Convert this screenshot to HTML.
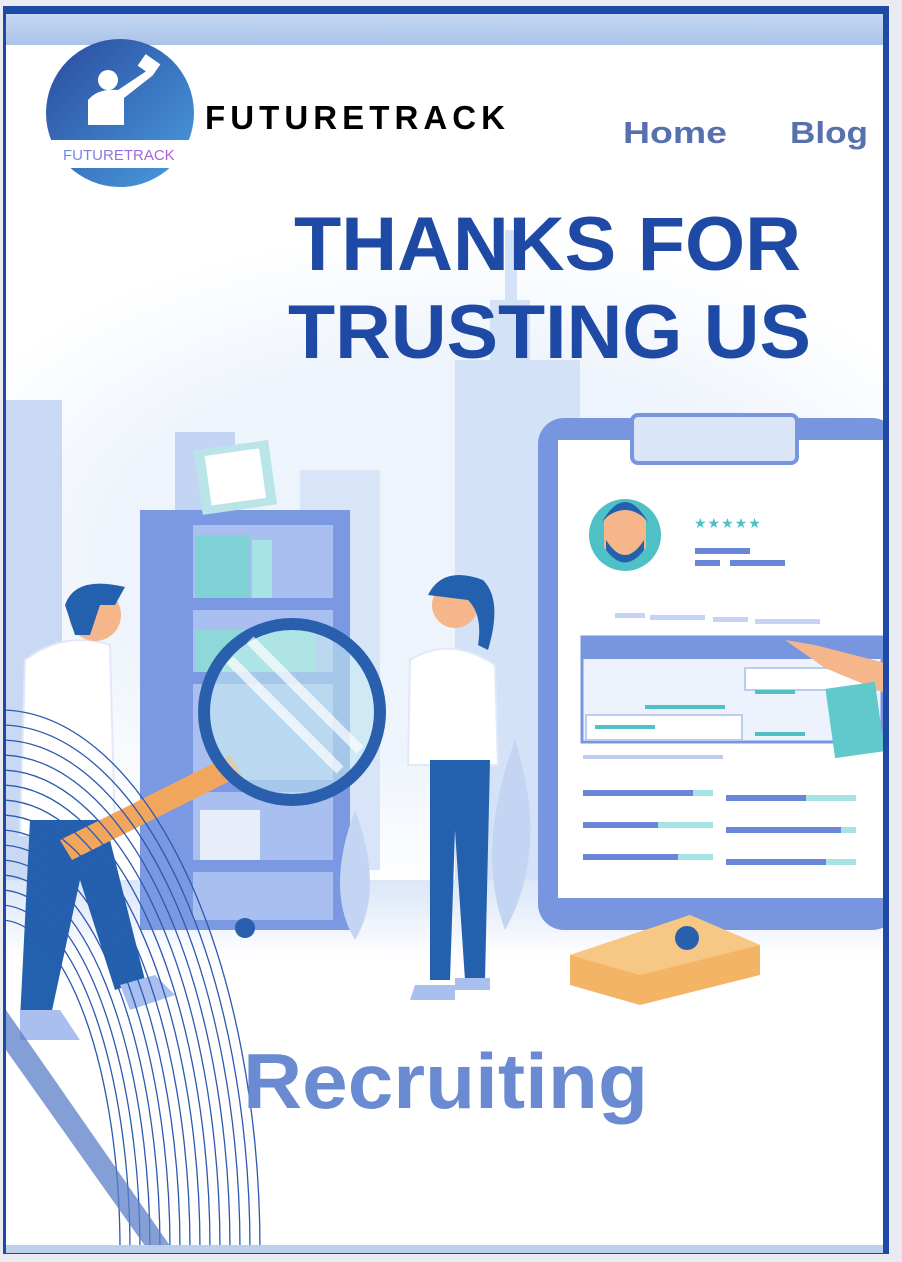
<!DOCTYPE html>
<html><head><meta charset="utf-8"><style>
html,body{margin:0;padding:0;width:902px;height:1262px;overflow:hidden;background:#e9ebf0;font-family:"Liberation Sans",sans-serif}
svg{position:absolute;left:0;top:0;display:block}
</style></head><body>
<svg width="902" height="1262" viewBox="0 0 902 1262" xmlns="http://www.w3.org/2000/svg">
<defs>
<linearGradient id="top" x1="0" y1="0" x2="0" y2="1"><stop offset="0" stop-color="#c6d8f2"/><stop offset="1" stop-color="#a9c3e8"/></linearGradient>
<linearGradient id="logo" x1="0" y1="0" x2="1" y2="1"><stop offset="0" stop-color="#2a4a9e"/><stop offset="1" stop-color="#4a9ee0"/></linearGradient>
<linearGradient id="floor" x1="0" y1="0" x2="0" y2="1"><stop offset="0" stop-color="#dbe6f8"/><stop offset="1" stop-color="#ffffff"/></linearGradient>
<linearGradient id="ft" x1="0" y1="0" x2="1" y2="0"><stop offset="0" stop-color="#6b8fe0"/><stop offset="1" stop-color="#b25ad6"/></linearGradient>
<radialGradient id="haze" cx="0.5" cy="0.5" r="0.5"><stop offset="0.6" stop-color="#eef4fc"/><stop offset="1" stop-color="#ffffff"/></radialGradient>
<clipPath id="content"><rect x="6" y="14" width="877" height="1239"/></clipPath>
</defs>
<rect x="3" y="6" width="886" height="1248" fill="#1e4aa6"/>
<g clip-path="url(#content)">
<rect x="0" y="0" width="902" height="1262" fill="#ffffff"/>
<rect x="0" y="14" width="902" height="31" fill="url(#top)"/>
<ellipse cx="450" cy="560" rx="560" ry="330" fill="url(#haze)"/>
<rect x="455" y="360" width="125" height="560" fill="#d3e2f7"/>
<rect x="490" y="300" width="40" height="70" fill="#d3e2f7"/>
<rect x="505" y="230" width="12" height="80" fill="#d3e2f7"/>
<rect x="6" y="400" width="56" height="540" fill="#c9d9f4"/>
<rect x="175" y="432" width="60" height="90" fill="#c3d5f3"/>
<rect x="300" y="470" width="80" height="400" fill="#d8e5f8"/>
<rect x="6" y="880" width="877" height="80" fill="url(#floor)"/>
<rect x="140" y="510" width="210" height="420" fill="#7b98e2"/>
<rect x="193" y="525" width="140" height="395" fill="#a9bff0"/>
<rect x="193" y="598" width="140" height="12" fill="#7b98e2"/>
<rect x="193" y="672" width="140" height="12" fill="#7b98e2"/>
<rect x="193" y="780" width="140" height="12" fill="#7b98e2"/>
<rect x="193" y="860" width="140" height="12" fill="#7b98e2"/>
<rect x="195" y="535" width="55" height="63" fill="#7fd3d6"/>
<rect x="252" y="540" width="20" height="58" fill="#a7e2e4"/>
<rect x="195" y="630" width="120" height="42" fill="#8fd8da"/>
<rect x="200" y="810" width="60" height="50" fill="#e8eef9"/>
<rect x="198" y="445" width="75" height="65" fill="#b9e5e8" transform="rotate(-8 235 478)"/>
<rect x="208" y="452" width="55" height="50" fill="#ffffff" transform="rotate(-8 235 478)"/>
<rect x="538" y="418" width="360" height="512" rx="26" fill="#7896df"/>
<rect x="558" y="440" width="330" height="458" fill="#ffffff"/>
<rect x="632" y="415" width="165" height="48" rx="6" fill="#dbe5f8" stroke="#7896df" stroke-width="4"/>
<circle cx="625" cy="535" r="36" fill="#4fc0c6"/>
<path d="M604 520 q21 -30 42 0 v28 q-21 25 -42 0z" fill="#f4b68a"/>
<path d="M602 522 q23 -40 46 0 l-6 -6 q-17 -12 -34 0z" fill="#2360ad"/>
<path d="M606 540 q19 30 38 0 v10 q-19 25 -38 0z" fill="#2360ad"/>
<text x="694" y="528" font-size="14" fill="#4fc0c6" letter-spacing="1">★★★★★</text>
<rect x="695" y="548" width="55" height="6" fill="#6a86d6"/>
<rect x="695" y="560" width="25" height="6" fill="#6a86d6"/>
<rect x="730" y="560" width="55" height="6" fill="#6a86d6"/>
<rect x="615" y="613" width="30" height="5" fill="#c4d3f3"/><rect x="650" y="615" width="55" height="5" fill="#c4d3f3"/><rect x="713" y="617" width="35" height="5" fill="#c4d3f3"/><rect x="755" y="619" width="65" height="5" fill="#c4d3f3"/>
<rect x="582" y="637" width="300" height="105" fill="#eef2fc" stroke="#7896df" stroke-width="3"/>
<rect x="582" y="637" width="300" height="22" fill="#7896df"/>
<rect x="745" y="668" width="137" height="22" fill="#ffffff" stroke="#bcccef" stroke-width="2"/>
<rect x="586" y="715" width="156" height="25" fill="#ffffff" stroke="#bcccef" stroke-width="2"/>
<rect x="755" y="690" width="40" height="4" fill="#4fc0c6"/>
<rect x="645" y="705" width="80" height="4" fill="#4fc0c6"/>
<rect x="595" y="725" width="60" height="4" fill="#4fc0c6"/>
<rect x="755" y="732" width="50" height="4" fill="#4fc0c6"/>
<rect x="583" y="755" width="140" height="4" fill="#bcccef"/>
<g fill="#6a86d6">
<rect x="583" y="790" width="110" height="6"/><rect x="726" y="795" width="80" height="6"/>
<rect x="583" y="822" width="75" height="6"/><rect x="726" y="827" width="115" height="6"/>
<rect x="583" y="854" width="95" height="6"/><rect x="726" y="859" width="100" height="6"/>
</g>
<g fill="#a7e2e4">
<rect x="693" y="790" width="20" height="6"/><rect x="806" y="795" width="50" height="6"/>
<rect x="658" y="822" width="55" height="6"/><rect x="841" y="827" width="15" height="6"/>
<rect x="678" y="854" width="35" height="6"/><rect x="826" y="859" width="30" height="6"/>
</g>
<path d="M785 640 l30 5 l70 18 v30 l-60 -25z" fill="#f4b68a"/>
<rect x="830" y="685" width="50" height="70" fill="#5fc9cc" transform="rotate(-8 855 720)"/>
<path d="M355 940 q-30 -50 0 -130 q30 80 0 130z" fill="#c3d5f3"/>
<path d="M505 930 q-30 -80 10 -190 q35 110 -10 190z" fill="#c3d5f3"/>
<path d="M25 660 q40 -30 85 -15 l5 190 h-95z" fill="#ffffff" stroke="#e1e9f8" stroke-width="2"/>
<path d="M30 820 h75 l40 160 l-30 10 l-35 -110 l-30 140 h-30z" fill="#2360ad"/>
<path d="M20 1010 h40 l20 30 h-60z" fill="#a9bff0"/>
<path d="M120 985 l35 -10 l20 20 l-45 15z" fill="#a9bff0"/>
<circle cx="95" cy="615" r="26" fill="#f4b68a"/>
<path d="M65 605 q10 -30 60 -18 l-10 18 l-15 0 l-10 30 l-15 0z" fill="#2360ad"/>
<path d="M410 660 q40 -25 85 5 l3 100 h-90z" fill="#ffffff" stroke="#e1e9f8" stroke-width="2"/>
<path d="M430 760 h60 l-5 220 h-20 l-10 -150 l-5 150 h-20z" fill="#2360ad"/>
<path d="M415 985 h40 v15 h-45z M455 978 h35 v12 h-35z" fill="#a9bff0"/>
<circle cx="455" cy="605" r="23" fill="#f4b68a"/>
<path d="M428 595 q15 -30 55 -15 q20 20 5 70 l-10 -5 q5 -30 -10 -45 z" fill="#2360ad"/>
<path d="M60 840 l170 -85 l12 20 l-170 85z" fill="#f2a55c"/>
<circle cx="292" cy="712" r="88" fill="#c8eef0" fill-opacity="0.55" stroke="#2a5fae" stroke-width="12"/>
<path d="M230 660 l110 110 M250 640 l110 110" stroke="#ffffff" stroke-width="10" opacity="0.7"/>
<path d="M570 955 l120 -40 l70 30 v30 l-120 30 l-70 -20z" fill="#f3b466"/>
<path d="M570 955 l70 20 l120 -30 l-70 -30z" fill="#f7c885"/>
<circle cx="687" cy="938" r="12" fill="#2a5fae"/>
<circle cx="245" cy="928" r="10" fill="#2a5fae"/>
<g fill="none" stroke="#2c59b0" stroke-width="1.3">
<ellipse cx="0" cy="1250" rx="260" ry="540"/>
<ellipse cx="0" cy="1250" rx="250" ry="525"/>
<ellipse cx="0" cy="1250" rx="240" ry="510"/>
<ellipse cx="0" cy="1250" rx="230" ry="495"/>
<ellipse cx="0" cy="1250" rx="220" ry="480"/>
<ellipse cx="0" cy="1250" rx="210" ry="465"/>
<ellipse cx="0" cy="1250" rx="200" ry="450"/>
<ellipse cx="0" cy="1250" rx="190" ry="435"/>
<ellipse cx="0" cy="1250" rx="180" ry="420"/>
<ellipse cx="0" cy="1250" rx="170" ry="405"/>
<ellipse cx="0" cy="1250" rx="160" ry="390"/>
<ellipse cx="0" cy="1250" rx="150" ry="375"/>
<ellipse cx="0" cy="1250" rx="140" ry="360"/>
<ellipse cx="0" cy="1250" rx="130" ry="345"/>
<ellipse cx="0" cy="1250" rx="120" ry="330"/>
</g>
<path d="M6 1010 L175 1253 L150 1253 L6 1050z" fill="#5b7fc8" opacity="0.75"/>
<text x="243" y="1108" font-size="78" font-weight="bold" fill="#6a8bd2" textLength="405" lengthAdjust="spacingAndGlyphs">Recruiting</text>
<rect x="6" y="1245" width="877" height="8" fill="#bcd0ee"/>
<circle cx="120" cy="113" r="74" fill="url(#logo)"/>
<rect x="45" y="140" width="150" height="28" fill="#ffffff"/>
<text x="63" y="160" font-size="15" fill="url(#ft)">FUTURETRACK</text>
<circle cx="108" cy="80" r="10" fill="#ffffff"/>
<path d="M88 125 v-25 q10 -12 30 -10 l30 -20 l4 6 l-28 22 v27z" fill="#ffffff"/>
<rect x="140" y="58" width="18" height="14" fill="#ffffff" transform="rotate(35 149 65)"/>
<text x="205" y="129" font-size="33" font-weight="bold" fill="#000" textLength="300" lengthAdjust="spacing">FUTURETRACK</text>
<text x="623" y="143" font-size="31" font-weight="bold" fill="#5770ae" textLength="104" lengthAdjust="spacingAndGlyphs">Home</text>
<text x="790" y="143" font-size="31" font-weight="bold" fill="#5770ae" textLength="78" lengthAdjust="spacingAndGlyphs">Blog</text>
<text x="294" y="270" font-size="76" font-weight="bold" fill="#1e4aa6" textLength="507" lengthAdjust="spacingAndGlyphs">THANKS FOR</text>
<text x="288" y="358" font-size="76" font-weight="bold" fill="#1e4aa6" textLength="523" lengthAdjust="spacingAndGlyphs">TRUSTING US</text>
</g>
</svg>
</body></html>
